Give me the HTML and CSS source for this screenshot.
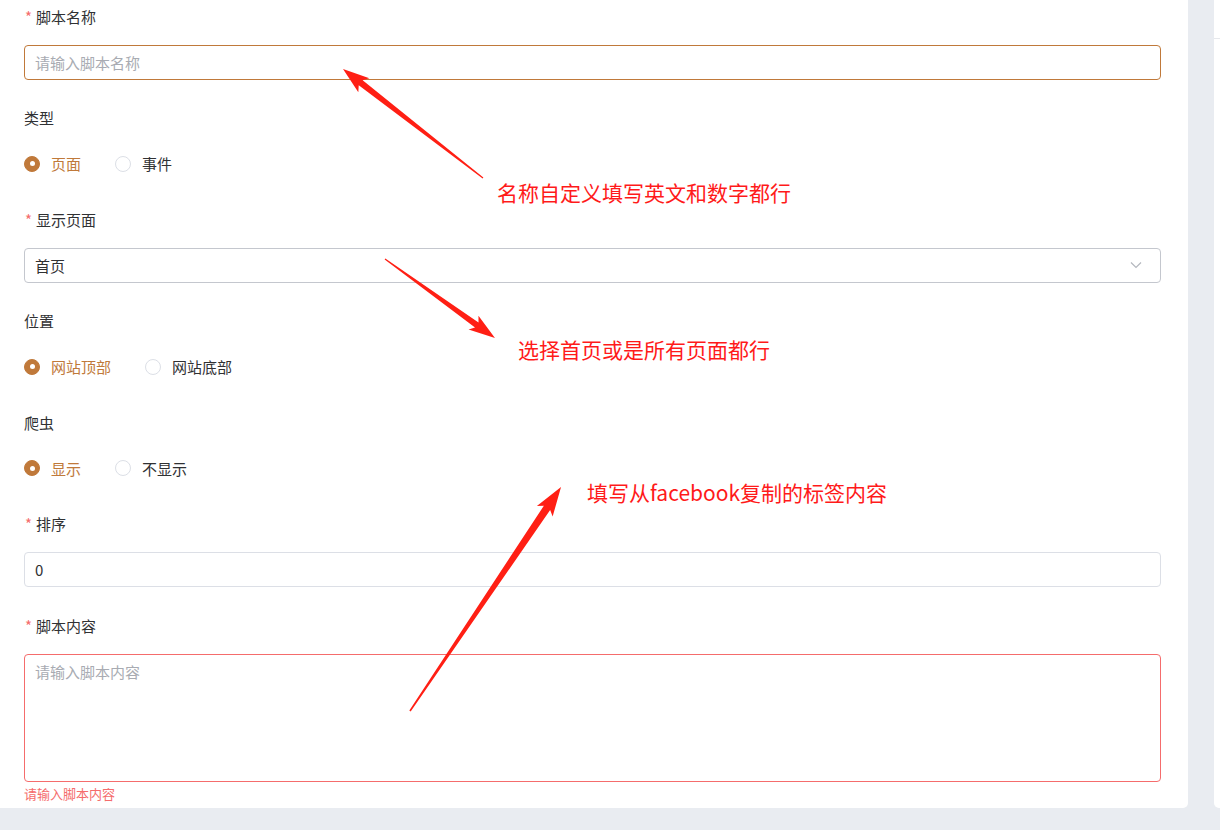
FILE: index.html
```html
<!DOCTYPE html>
<html lang="zh-CN">
<head>
<meta charset="utf-8">
<title>脚本编辑</title>
<link rel="stylesheet" href="styles.css">
</head>
<body>
<div class="page">
  <main class="panel">
    <form class="form">
      <div class="item">
        <div class="label req">脚本名称</div>
        <div class="input focus"><span class="ph">请输入脚本名称</span></div>
      </div>
      <div class="item">
        <div class="label">类型</div>
        <div class="radios">
          <span class="radio checked"><i class="dot"></i>页面</span>
          <span class="radio"><i class="dot"></i>事件</span>
        </div>
      </div>
      <div class="item">
        <div class="label req">显示页面</div>
        <div class="input select"><span class="val">首页</span>
          <svg class="chev" width="12" height="8" viewBox="0 0 12 8"><path d="M1 1.5 L6 6.5 L11 1.5" fill="none" stroke="#b4b7be" stroke-width="1.2"/></svg>
        </div>
      </div>
      <div class="item">
        <div class="label">位置</div>
        <div class="radios">
          <span class="radio checked"><i class="dot"></i>网站顶部</span>
          <span class="radio"><i class="dot"></i>网站底部</span>
        </div>
      </div>
      <div class="item">
        <div class="label">爬虫</div>
        <div class="radios">
          <span class="radio checked"><i class="dot"></i>显示</span>
          <span class="radio"><i class="dot"></i>不显示</span>
        </div>
      </div>
      <div class="item">
        <div class="label req">排序</div>
        <div class="input"><span class="val">0</span></div>
      </div>
      <div class="item last">
        <div class="label req">脚本内容</div>
        <div class="textarea error"><span class="ph">请输入脚本内容</span></div>
        <div class="err">请输入脚本内容</div>
      </div>
    </form>

    <svg class="arrows" width="1188" height="808" viewBox="0 0 1188 808">
      <g fill="#ff1f14">
        <g transform="translate(483 178) rotate(-142.1)">
          <polygon points="0,-0.6 155,-3.2 151,-9 177.4,0 151,9 155,3.2 0,0.6"/>
        </g>
        <g transform="translate(385 259) rotate(35.7)">
          <polygon points="0,-0.6 113,-3 109,-8.5 135.4,0 109,8.5 113,3 0,0.6"/>
        </g>
        <g transform="translate(410 711) rotate(-56)">
          <polygon points="0,-0.8 245,-3.8 241,-9.5 270.1,0 241,9.5 245,3.8 0,0.8"/>
        </g>
      </g>
    </svg>
    <div class="note n1">名称自定义填写英文和数字都行</div>
    <div class="note n2">选择首页或是所有页面都行</div>
    <div class="note n3">填写从facebook复制的标签内容</div>
  </main>
  <aside class="side">
    <div class="side-head"></div>
  </aside>
</div>
</body>
</html>
```

FILE: styles.css
```css
html, body {
  margin: 0;
  padding: 0;
}
body {
  width: 1220px;
  height: 830px;
  background: #e9ecf1;
  font-family: "Noto Sans CJK SC", "Noto Sans", sans-serif;
  font-size: 15px;
  color: #303133;
  overflow: hidden;
}
.page {
  display: flex;
  gap: 26px;
  height: 808px;
}
.panel {
  position: relative;
  width: 1188px;
  flex: none;
  box-sizing: border-box;
  height: 808px;
  background: #fff;
  border-radius: 0 0 5px 0;
  padding: 0.5px 27px 0 24px;
}
.side {
  flex: 1;
  background: #fff;
  border-radius: 0 0 0 5px;
}
.side-head {
  height: 38px;
  border-bottom: 1px solid #e6e8ec;
}
.form {
  display: flex;
  flex-direction: column;
}
.item {
  display: flex;
  flex-direction: column;
  margin-bottom: 22.5px;
}
.item.last {
  margin-bottom: 0;
}
.label {
  height: 32px;
  line-height: 32px;
  margin-bottom: 12px;
  color: #303133;
  font-size: 15px;
}
.label.req::before {
  content: "*";
  color: #f56c6c;
  margin-right: 4px;
  margin-left: 1px;
}
.input {
  box-sizing: border-box;
  height: 35px;
  border: 1px solid #dcdfe6;
  border-radius: 4px;
  padding: 0 10px;
  display: flex;
  align-items: center;
  font-size: 15px;
}
.input.focus {
  border-color: #c0793a;
}
.input.select {
  border-color: #c4c7ce;
  justify-content: space-between;
}
.chev {
  margin-right: 8px;
}
.ph {
  color: #a8abb2;
}
.val {
  color: #303133;
}
.textarea {
  box-sizing: border-box;
  height: 128px;
  border: 1px solid #f56c6c;
  border-radius: 4px;
  padding: 6px 10px;
  font-size: 15px;
  line-height: 22px;
}
.err {
  color: #f56c6c;
  font-size: 13px;
  line-height: 18px;
  margin-top: 3px;
}
.radios {
  height: 35px;
  display: flex;
  align-items: center;
}
.radio {
  display: inline-flex;
  align-items: center;
  margin-right: 34px;
  font-size: 15px;
  color: #303133;
}
.radio .dot {
  box-sizing: border-box;
  width: 16px;
  height: 16px;
  border-radius: 50%;
  border: 1px solid #dcdfe6;
  background: #fff;
  margin-right: 11px;
  position: relative;
}
.radio.checked {
  color: #c0793a;
}
.radio.checked .dot {
  border-color: #c0793a;
  background: #c0793a;
}
.radio.checked .dot::after {
  content: "";
  position: absolute;
  left: 50%;
  top: 50%;
  width: 5px;
  height: 5px;
  margin: -2.5px 0 0 -2.5px;
  border-radius: 50%;
  background: #fff;
}
.arrows {
  position: absolute;
  left: 0;
  top: 0;
  pointer-events: none;
}
.note {
  position: absolute;
  color: #ff1a1a;
  font-size: 21px;
  line-height: 28px;
  white-space: nowrap;
}
.n1 { left: 497px; top: 178px; }
.n2 { left: 518px; top: 335px; }
.n3 { left: 587px; top: 478px; }
```
